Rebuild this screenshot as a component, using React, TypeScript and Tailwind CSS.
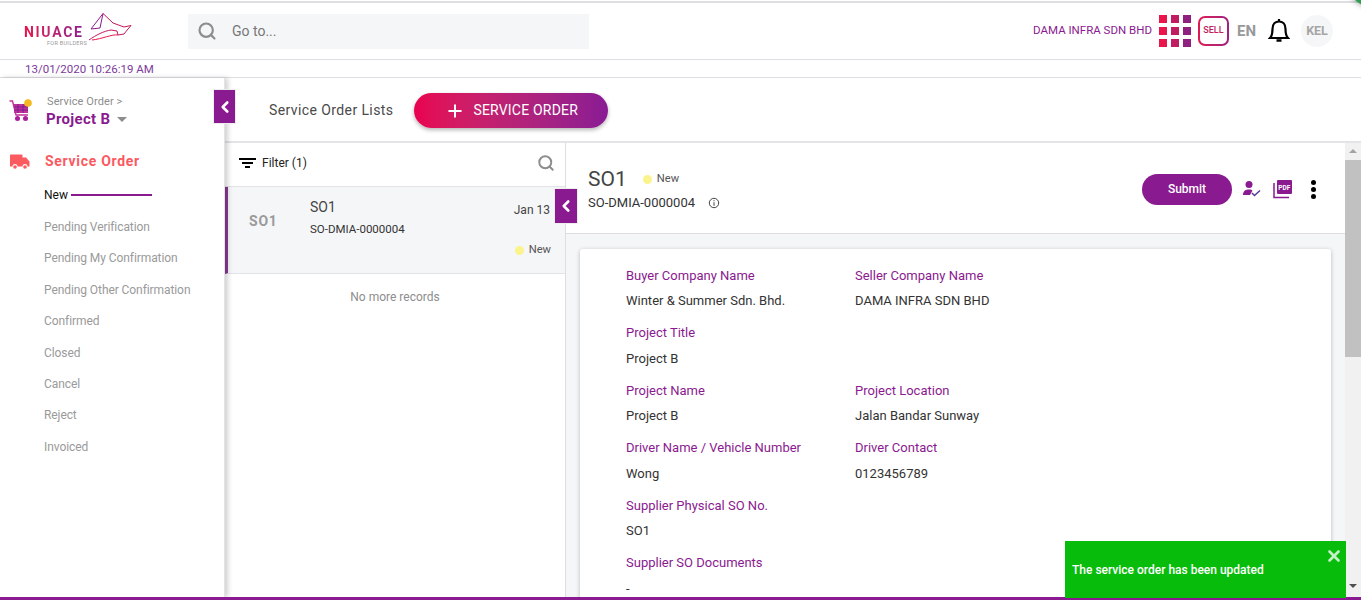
import React from "react";
import { ChevronLeft, Plus, Search, X } from "lucide-react";

const sideItems = [
  "Pending Verification",
  "Pending My Confirmation",
  "Pending Other Confirmation",
  "Confirmed",
  "Closed",
  "Cancel",
  "Reject",
  "Invoiced",
];

const Logo = () => (
  <div className="relative h-[30px] w-[110px]">
    <span className="absolute left-[1px] top-[8px] bg-gradient-to-r from-[#e8114b] to-[#8e1a8e] bg-clip-text text-[14px] leading-[16px] font-bold tracking-[1.7px] text-transparent">
      NIUACE
    </span>
    <span className="absolute left-[24px] top-[24px] text-[5.5px] leading-[6px] tracking-[0.3px] text-[#999]">
      FOR BUILDERS
    </span>
    <svg className="absolute left-[65px] top-[-3px]" width="44" height="28" viewBox="0 0 44 28" fill="none" stroke="#c2185b" strokeWidth="1">
      <path d="M15 .5 L25 10 L36 14 L43 12.5 L40 16 L36 21 L30 22 L29 18 L23 17 C16 18 8 22 1 27" />
      <path d="M4 27 C14 26 24 21 30 22" stroke="#e8164b" />
      <path d="M15 .5 L3 16 L12 15 L15 .5 Z" stroke="#8e1a8e" />
    </svg>
  </div>
);

const Field = ({ label, value }: { label: string; value: string }) => (
  <div className="w-[229px]">
    <div className="text-[13px] leading-[16px] text-[#8a1a8f]">{label}</div>
    <div className="mt-[9.6px] text-[13px] leading-[16px] text-[#333]">{value}</div>
  </div>
);

const App = () => {
  return (
    <div className="relative h-[600px] w-[1361px] overflow-hidden bg-white font-['Roboto',sans-serif]">
      <div className="h-[3px] border-b-2 border-[#dfdfe3]" />

      {/* header */}
      <header className="flex h-[57px] items-center border-b border-[#dedee2] pl-[23px] pr-[28px]">
        <Logo />
        <div className="ml-[55px] flex h-[35px] w-[401px] items-center bg-[#f5f6f8] pl-[9px]">
          <Search size={20} strokeWidth={2.6} className="text-[#8d8d8d]" />
          <span className="ml-[15px] text-[14px] text-[#777]">Go to...</span>
        </div>
        <div className="ml-auto flex items-center">
          <span className="text-[11.5px] text-[#8a1a8f]">DAMA INFRA SDN BHD</span>
          <div className="ml-[7px] grid grid-cols-3 gap-[4px]">
            {["#e8164b", "#c01d62", "#8e2080", "#e8164b", "#c01d62", "#8e2080", "#e8164b", "#c01d62", "#8e2080"].map((c, i) => (
              <div key={i} className="h-[8px] w-[8px]" style={{ backgroundColor: c }} />
            ))}
          </div>
          <div className="ml-[7px] h-[30px] w-[31px] rounded-[7px] bg-gradient-to-r from-[#e0184f] to-[#a01f80] p-[2px]">
            <div className="flex h-full w-full items-center justify-center rounded-[5px] bg-white text-[9px] font-medium text-[#c2205f]">
              SELL
            </div>
          </div>
          <span className="ml-[8px] text-[15px] font-bold text-[#999]">EN</span>
          <svg className="ml-[12px]" width="22" height="26" viewBox="0 0 22 26" fill="none" stroke="#000" strokeWidth="2.2">
            <path d="M2 20 C4 18 4.5 16 4.5 11 C4.5 6 7.5 3.5 11 3.5 C14.5 3.5 17.5 6 17.5 11 C17.5 16 18 18 20 20 Z" />
            <path d="M11 1 V3" />
            <path d="M8.5 22.5 H13.5" strokeWidth="2.5" />
          </svg>
          <div className="ml-[11px] flex h-[32px] w-[32px] items-center justify-center rounded-full bg-[#f5f6f8] text-[12.5px] font-bold text-[#a5a5a5]">
            KEL
          </div>
        </div>
      </header>

      <div className="h-[18px] border-b border-[#dedee2] pl-[25px] text-[11.5px] leading-[18px] text-[#7d3a9c]">
        13/01/2020 10:26:19 AM
      </div>

      <div className="flex h-[519px]">
        {/* sidebar */}
        <aside className="relative z-10 w-[225px] shrink-0 border-r border-[#e4e4e4] bg-white shadow-[3px_0_5px_rgba(0,0,0,0.18)]">
          <div className="flex items-start pl-[9px] pt-[17px]">
            <svg className="mt-[4px]" width="24" height="24" viewBox="0 0 24 24">
              <path d="M0.5 2 H3.5 L7 16 H19" fill="none" stroke="#c2309a" strokeWidth="1.4" />
              <rect x="5" y="5" width="14" height="9" fill="#c2309a" />
              <path d="M5 8 H19 M5 11 H19 M9 5 V14 M14 5 V14" stroke="#7d1f8f" strokeWidth="1" />
              <circle cx="8.5" cy="19.5" r="2.5" fill="#a8209a" />
              <circle cx="16.5" cy="19.5" r="2.5" fill="#a8209a" />
              <circle cx="19" cy="4" r="3.8" fill="#f5b81f" />
            </svg>
            <div className="ml-[14px]">
              <div className="text-[11px] leading-[13px] tracking-[0.1px] text-[#8d8d8d]">Service Order &gt;</div>
              <div className="-ml-[1px] mt-[1px] flex items-center">
                <span className="text-[15px] leading-[20px] font-bold tracking-[0.3px] text-[#8a1a8f]">Project B</span>
                <span className="ml-[7px] h-0 w-0 border-x-[5px] border-t-[5px] border-x-transparent border-t-[#8d8d8d]" />
              </div>
            </div>
          </div>
          <div className="mt-[22px] flex items-center pl-[10px]">
            <svg width="20" height="16" viewBox="0 0 20 16" fill="#fb5a5f">
              <path d="M0 1.5 A1 1 0 0 1 1 .5 H11.5 A1 1 0 0 1 12.5 1.5 V3.5 H16 L19.5 7.5 V12.5 H17.5 A2.5 2.5 0 0 0 12.5 12.5 H7.5 A2.5 2.5 0 0 0 2.5 12.5 H0 Z" />
              <circle cx="5" cy="13" r="1.8" />
              <circle cx="15" cy="13" r="1.8" />
            </svg>
            <span className="ml-[15px] text-[14px] font-bold tracking-[0.7px] text-[#fb5a5f]">Service Order</span>
          </div>
          <div className="mt-[15px] flex h-[16px] items-center pl-[44px]">
            <span className="text-[12px] text-[#111]">New</span>
            <span className="ml-[3px] h-[2px] w-[81px] bg-[#8a1a8f]" />
          </div>
          <ul className="mt-[16px] flex flex-col gap-[15.4px] pl-[44px]">
            {sideItems.map((item) => (
              <li key={item} className="text-[12px] leading-[16px] tracking-[-0.08px] text-[#9a9a9a]">
                {item}
              </li>
            ))}
          </ul>
          <button className="absolute left-[213px] top-[11px] flex h-[35px] w-[23px] items-center justify-center border border-[#eee] bg-[#8a1a8f] text-white">
            <ChevronLeft size={18} strokeWidth={3.5} />
          </button>
        </aside>

        <main className="flex min-w-0 flex-1 flex-col">
          {/* top bar */}
          <div className="flex h-[65px] shrink-0 items-center border-b-2 border-[#e3e3e8] pl-[44px] pt-[2px]">
            <span className="text-[14px] tracking-[0.4px] text-[#4a4a4a]">Service Order Lists</span>
            <button className="ml-[21px] flex h-[35px] w-[194px] items-center rounded-full bg-gradient-to-r from-[#e9004f] to-[#8a1a94] pl-[31px] text-[14px] text-white shadow-[0_2px_4px_rgba(0,0,0,0.3)]">
              <Plus size={20} strokeWidth={2.4} />
              <span className="ml-[8px] tracking-[0.2px]">SERVICE ORDER</span>
            </button>
          </div>

          <div className="flex min-h-0 flex-1">
            {/* list */}
            <section className="relative w-[341px] shrink-0 border-r border-[#dedee2]">
              <div className="flex h-[44px] items-center border-b border-[#e1e3e6] pb-[4px] pl-[14px] pr-[10px]">
                <div className="flex w-[17px] flex-col items-center gap-[2px]">
                  <span className="h-[2px] w-[17px] bg-black" />
                  <span className="h-[2px] w-[11px] bg-black" />
                  <span className="h-[2px] w-[5px] bg-black" />
                </div>
                <span className="ml-[6px] text-[12px] text-[#222]">Filter (1)</span>
                <Search size={18} strokeWidth={2.6} className="ml-auto text-[#8d8d8d]" />
              </div>
              <div className="flex h-[87px] border-b border-l-[3px] border-[#e1e3e6] border-l-[#8a3a96] bg-[#f5f6f8]">
                <span className="ml-[21px] mt-[26px] w-[40px] text-[14px] leading-[16px] font-bold tracking-[0.8px] text-[#9a9a9a]">SO1</span>
                <div className="ml-[21px] pt-[12px]">
                  <div className="text-[14px] leading-[16px] text-[#444]">SO1</div>
                  <div className="mt-[7px] text-[11.5px] leading-[14px] text-[#333]">SO-DMIA-0000004</div>
                </div>
                <div className="ml-auto flex flex-col items-end pr-[15px] pt-[15px]">
                  <span className="text-[12px] leading-[16px] text-[#444]">Jan 13</span>
                  <div className="-mr-[1px] mt-[24px] flex items-center">
                    <span className="h-[9px] w-[9px] rounded-full bg-[#fbf38c]" />
                    <span className="ml-[5px] text-[11.2px] text-[#555]">New</span>
                  </div>
                </div>
              </div>
              <div className="mt-[14px] text-center text-[12px] text-[#8d8d8d]">No more records</div>
              <button className="absolute right-[-13px] top-[45px] z-10 flex h-[36px] w-[24px] items-center justify-center border border-[#eee] bg-[#8a1a8f] text-white">
                <ChevronLeft size={18} strokeWidth={3.5} />
              </button>
            </section>

            {/* detail */}
            <section className="flex min-w-0 flex-1 flex-col">
              <div className="flex h-[91px] shrink-0 items-center border-b border-[#dedee2] pl-[22px] pr-[30px]">
                <div className="pt-[3px]">
                  <div className="flex items-center">
                    <span className="text-[21px] leading-[24px] text-[#444]">SO1</span>
                    <span className="ml-[16px] mt-[1px] h-[9px] w-[9px] rounded-full bg-[#fbf38c]" />
                    <span className="ml-[5px] mt-[1px] text-[11.2px] text-[#555]">New</span>
                  </div>
                  <div className="mt-[2px] flex items-center">
                    <span className="text-[13px] text-[#333]">SO-DMIA-0000004</span>
                    <svg className="ml-[13px]" width="12" height="12" viewBox="0 0 12 12" fill="none" stroke="#444">
                      <circle cx="6" cy="6" r="4.7" />
                      <path d="M6 5.2 V8.8 M6 3.2 V4.2" />
                    </svg>
                  </div>
                </div>
                <div className="ml-auto flex items-center pt-[2px]">
                  <button className="h-[31px] w-[90px] rounded-full bg-[#8a1a8f] text-[12px] font-medium text-white">Submit</button>
                  <svg className="ml-[10px]" width="19" height="18" viewBox="0 0 19 18">
                    <circle cx="7" cy="4.5" r="3.5" fill="#8a1a8f" />
                    <path d="M1 15 C1 10.5 4 9.5 7 9.5 C9 9.5 10 10 10.5 10.5 L8 15 Z" fill="#8a1a8f" />
                    <path d="M10 13 L12.5 15.5 L18 10.5" fill="none" stroke="#5a3a9a" strokeWidth="1.6" />
                  </svg>
                  <svg className="ml-[12px]" width="20" height="20" viewBox="0 0 20 20">
                    <path d="M1 4 V18.5 H16" fill="none" stroke="#8a1a8f" strokeWidth="1.5" />
                    <rect x="4" y="1" width="15" height="14" rx="1" fill="#8a1a8f" />
                    <text x="5.3" y="10.5" fontSize="6.5" fontWeight="700" fill="#fff" fontFamily="Roboto, sans-serif">PDF</text>
                  </svg>
                  <div className="-mr-[1px] ml-[18px] flex flex-col gap-[2px]">
                    <span className="h-[5px] w-[5px] rounded-full bg-black" />
                    <span className="h-[5px] w-[5px] rounded-full bg-black" />
                    <span className="h-[5px] w-[5px] rounded-full bg-black" />
                  </div>
                </div>
              </div>
              <div className="min-h-0 flex-1 bg-[#f5f6f8] px-[14px] pt-[15px]">
                <div className="flex h-[400px] flex-col gap-[16px] rounded-[3px] bg-white pl-[46px] pt-[18.5px] shadow-[0_1px_4px_rgba(0,0,0,0.25)]">
                  <div className="flex">
                    <Field label="Buyer Company Name" value="Winter & Summer Sdn. Bhd." />
                    <Field label="Seller Company Name" value="DAMA INFRA SDN BHD" />
                  </div>
                  <Field label="Project Title" value="Project B" />
                  <div className="flex">
                    <Field label="Project Name" value="Project B" />
                    <Field label="Project Location" value="Jalan Bandar Sunway" />
                  </div>
                  <div className="flex">
                    <Field label="Driver Name / Vehicle Number" value="Wong" />
                    <Field label="Driver Contact" value="0123456789" />
                  </div>
                  <Field label="Supplier Physical SO No." value="SO1" />
                  <Field label="Supplier SO Documents" value="-" />
                </div>
              </div>
            </section>

            {/* scrollbar */}
            <div className="flex w-[16px] shrink-0 flex-col items-center bg-[#f1f1f1]">
              <span className="mt-[6px] h-0 w-0 border-x-[4px] border-b-[4px] border-x-transparent border-b-[#a3a3a3]" />
              <div className="mt-[7px] h-[197px] w-full bg-[#c1c1c1]" />
              <span className="mb-[9px] mt-auto h-0 w-0 border-x-[4px] border-t-[4px] border-x-transparent border-t-[#505050]" />
            </div>
          </div>
        </main>
      </div>

      {/* bottom line */}
      <div className="absolute bottom-0 left-0 right-0 z-20 h-[3px] bg-[#8a1a8f]" />

      {/* toast */}
      <div className="absolute left-[1065px] top-[541px] z-30 flex h-[57px] w-[281px] items-center bg-[#08bc0c] pl-[7px] text-[12px] font-medium text-white">
        The service order has been updated
        <X size={18} strokeWidth={3.5} className="absolute right-[3px] top-[6px] text-[#c5efc6]" />
      </div>

      {/* corner of an overlapping widget */}
      <div className="absolute right-[-35px] top-[-41px] z-30 h-[48px] w-[48px] rounded-full bg-[#2e9e4f] shadow-[0_0_6px_rgba(0,0,0,0.4)]" />
    </div>
  );
};

export default App;
